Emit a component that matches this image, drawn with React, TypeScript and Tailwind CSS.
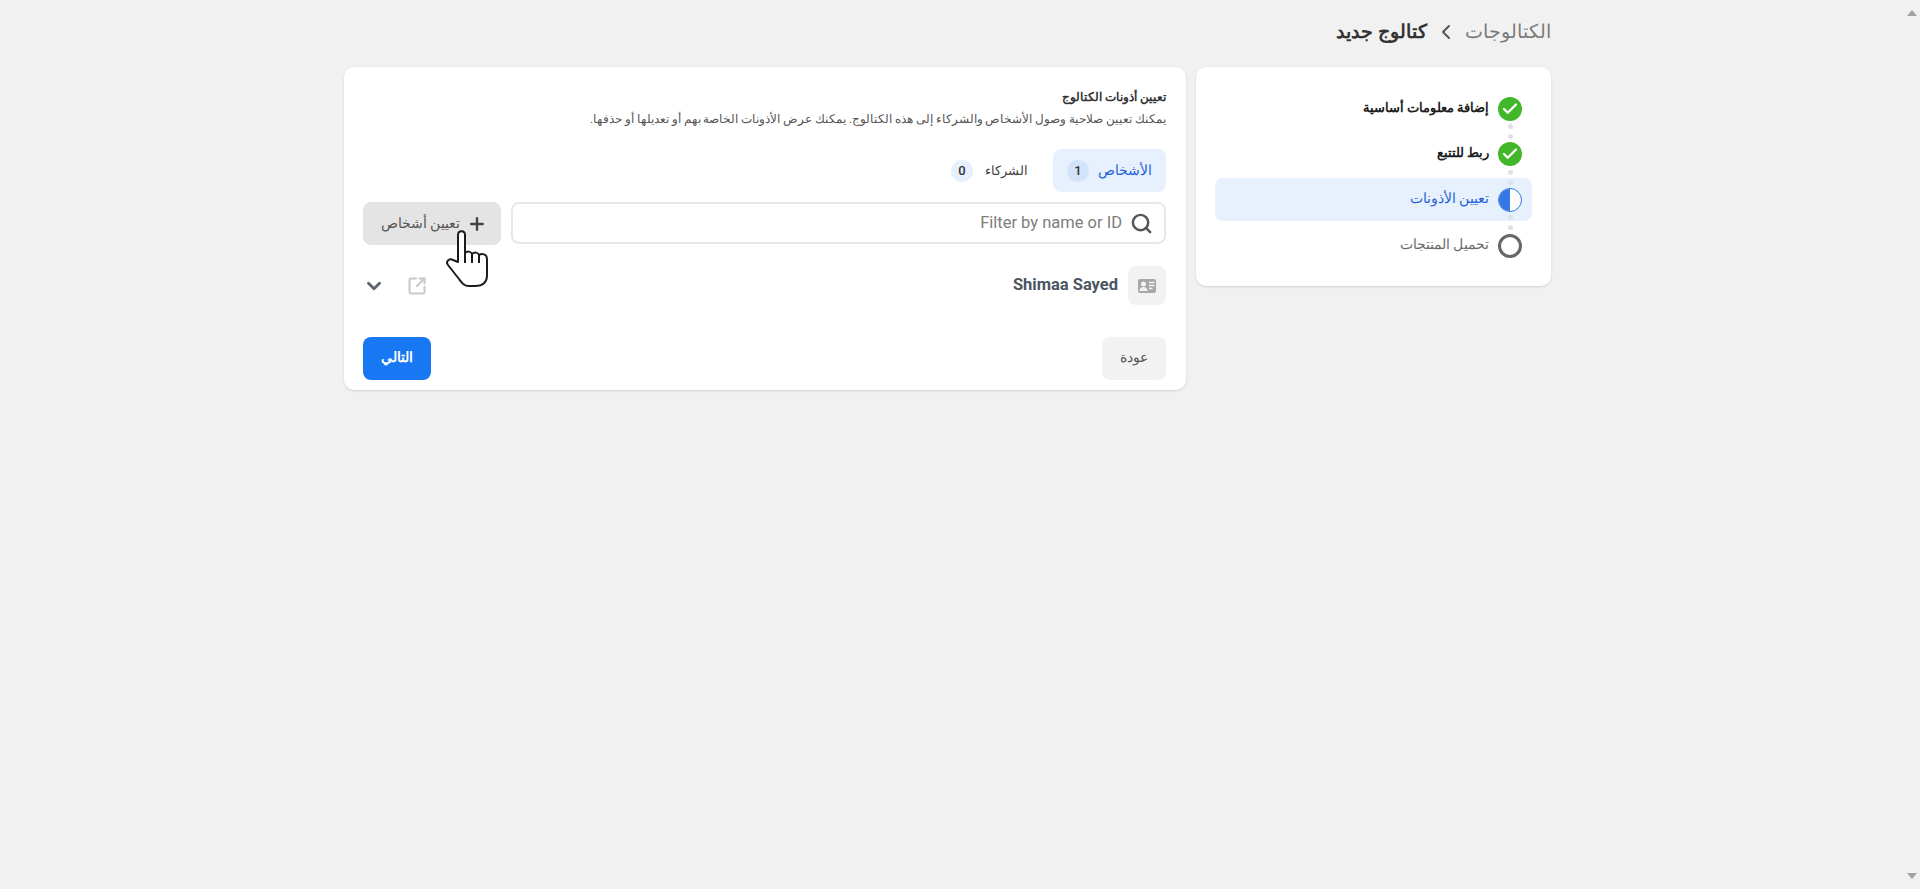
import { Check, ChevronDown, ChevronLeft, Plus, Search, SquareArrowOutUpRight } from "lucide-react"

const steps = [
  { label: "إضافة معلومات أساسية", state: "done" },
  { label: "ربط للتتبع", state: "done" },
  { label: "تعيين الأذونات", state: "active" },
  { label: "تحميل المنتجات", state: "todo" },
]

function StepIcon({ state }: { state: string }) {
  if (state === "done") {
    return (
      <span className="w-6 h-6 rounded-full bg-[#42b72a] flex items-center justify-center shrink-0">
        <Check size={18} strokeWidth={3} className="text-white" />
      </span>
    )
  }
  if (state === "active") {
    return (
      <span className="w-6 h-6 rounded-full border border-[#3578e5] overflow-hidden flex justify-end shrink-0 bg-white">
        <span className="w-1/2 h-full bg-[#3578e5]" />
      </span>
    )
  }
  return <span className="w-6 h-6 rounded-full border-[3px] border-[#65676b] shrink-0" />
}

function Hand() {
  return (
    <svg width="46" height="62" viewBox="0 0 46 62" className="absolute left-[82px] top-[26px] pointer-events-none">
      <path
        d="M13 34V7c0-5 7-5 7 0v18c2-2 6-2 7 1 2-2 6-2 7 1 3-2 8-1 8 4v16c0 7-4 11-12 11h-6c-5 0-7-3-10-7L3 37c-3-4 2-7 5-5z"
        fill="#fff"
        stroke="#1c1c1c"
        strokeWidth="2"
        strokeLinejoin="round"
      />
      <path d="M20 25v10M27 26v9M34 27v8" stroke="#1c1c1c" strokeWidth="2" fill="none" />
    </svg>
  )
}

export default function App() {
  return (
    <div dir="rtl" className="h-[889px] overflow-hidden bg-[#f1f1f1] flex font-['Roboto','Liberation_Sans',sans-serif]">
      {/* scrollbar */}
      <div className="w-[17px] h-full flex flex-col justify-between items-center py-[10px] shrink-0 ml-[352px]">
        <span className="w-0 h-0 border-x-[5px] border-x-transparent border-b-[6px] border-b-[#a3a3a3]" />
        <span className="w-0 h-0 border-x-[5px] border-x-transparent border-t-[6px] border-t-[#a3a3a3]" />
      </div>

      <div className="w-[1207px] shrink-0">
        <div className="h-[67px] flex items-start pt-[19px] gap-[7px] leading-[26px]">
          <span className="text-[18.7px] text-[#7a7a7a]">الكتالوجات</span>
          <ChevronLeft size={24} className="text-[#555] mt-[1px]" />
          <span className="text-[19.3px] font-bold text-[#333]">كتالوج جديد</span>
        </div>

        <div className="flex gap-[10px] items-start">
          <div className="w-[355px] h-[219px] bg-white rounded-[10px] shadow-sm px-[19px] pt-[20px] flex flex-col gap-[2.7px] shrink-0">
            {steps.map((s, i) => (
              <div
                key={s.label}
                className={`relative h-[43px] rounded-lg flex items-center gap-[9px] pr-[10px] ${
                  s.state === "active"
                    ? "text-[14px] bg-[#e7f0fd] text-[#1e62d8]"
                    : s.state === "todo"
                      ? "text-[13.5px] text-[#6b6b6b]"
                      : "text-[13px] font-bold text-[#1c1e21]"
                }`}
              >
                <StepIcon state={s.state} />
                <span className="pb-[2px]">{s.label}</span>
                {i < 3 && (
                  <span className="absolute right-[19.5px] top-[37px] flex flex-col gap-[5px] z-10">
                    <span className="w-[5px] h-[5px] rounded-full bg-[#dfe1e5]" />
                    <span className="w-[5px] h-[5px] rounded-full bg-[#dfe1e5]" />
                  </span>
                )}
              </div>
            ))}
          </div>

          <div className="w-[842px] h-[323px] bg-white rounded-[10px] shadow-sm pr-[20px] pl-[19px] pt-[20px] shrink-0">
            <h2 className="text-[12px] leading-[20px] font-bold text-[#333]">تعيين أذونات الكتالوج</h2>
            <p className="text-[11.6px] leading-[18px] mt-[3px] text-[#555]">
              يمكنك تعيين صلاحية وصول الأشخاص والشركاء إلى هذه الكتالوج. يمكنك عرض الأذونات الخاصة بهم أو تعديلها أو حذفها.
            </p>

            <div className="flex gap-[11px] mt-[21px] h-[43px] text-[14px]">
              <div className="w-[113px] rounded-lg bg-[#e7f0fd] text-[#1e62d8] flex items-center gap-[9px] pr-[14px]">
                <span>الأشخاص</span>
                <span className="w-[22px] h-[22px] rounded-full bg-[#d3e3fb] text-[#333] font-medium flex items-center justify-center text-[13px]">1</span>
              </div>
              <div className="flex items-center gap-[12px] px-[14px] text-[12.7px] text-[#444]">
                <span>الشركاء</span>
                <span className="w-[22px] h-[22px] rounded-full bg-[#e7f0fd] text-[#333] font-medium flex items-center justify-center text-[13px]">0</span>
              </div>
            </div>

            <div className="flex gap-[10px] mt-[10px]">
              <div className="flex-1 h-[42px] rounded-lg border-2 border-[#e8e8e8] flex items-center gap-[8px] pr-[11px]">
                <Search size={23} strokeWidth={2.6} className="text-[#555] shrink-0" />
                <span className="text-[16.5px] text-[#7d7d7d]">Filter by name or ID</span>
              </div>
              <div className="relative w-[138px] h-[43px] rounded-lg bg-[#e4e4e4] flex items-center gap-[7px] pr-[14px] text-[13.5px] text-[#555]">
                <Plus size={20} strokeWidth={2.8} className="text-[#444]" />
                <span>تعيين أشخاص</span>
                <Hand />
              </div>
            </div>

            <div className="flex items-center mt-[21px] h-[39px]">
              <span className="w-[38px] h-[39px] rounded-lg bg-[#f2f2f2] flex items-center justify-center">
                <svg width="18" height="14" viewBox="0 0 18 14">
                  <rect width="18" height="14" rx="2" fill="#a8a8a8" />
                  <circle cx="5.5" cy="5" r="2.5" fill="#f2f2f2" />
                  <path d="M1.5 12c0-3 2-4 4-4s4 1 4 4z" fill="#f2f2f2" />
                  <path d="M11 3.5h5.5M11 6.5h5.5M11 9.5h3.5" stroke="#f2f2f2" strokeWidth="1.3" />
                </svg>
              </span>
              <span className="mr-[10px] text-[16.5px] font-bold text-[#4b5563] flex-1">Shimaa Sayed</span>
              <SquareArrowOutUpRight size={20} strokeWidth={2.4} className="text-[#c8c8c8] ml-[22px]" />
              <ChevronDown size={22} strokeWidth={3.2} className="text-[#606770]" />
            </div>

            <div className="flex justify-between mt-[32px]">
              <span className="w-[64px] h-[43px] rounded-lg bg-[#f2f2f2] flex items-center justify-center pb-[2px] text-[13.5px] text-[#555]">عودة</span>
              <span className="w-[68px] h-[43px] rounded-lg bg-[#1877f2] flex items-center justify-center pb-[3px] text-[13.5px] font-bold text-white">التالي</span>
            </div>
          </div>
        </div>
      </div>
    </div>
  )
}
